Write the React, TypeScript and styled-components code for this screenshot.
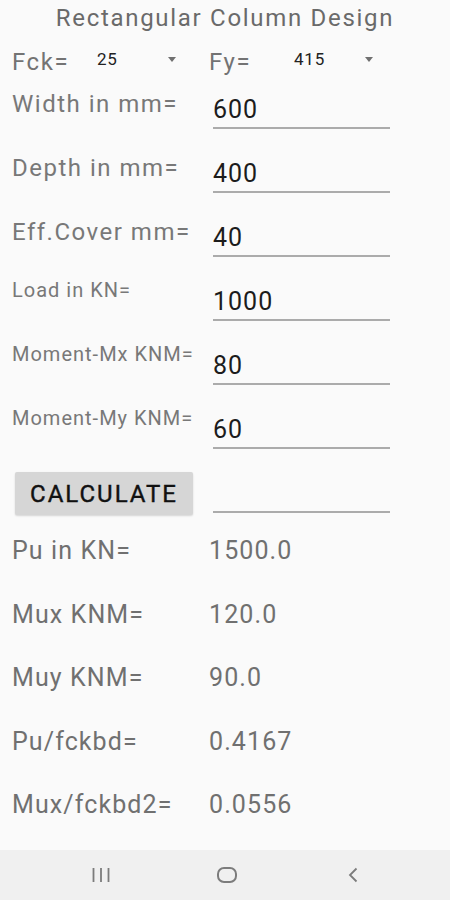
import styled, { createGlobalStyle } from "styled-components";

type Field = {
  label: string;
  value: string;
  small?: boolean;
};

const fields: Field[] = [
  { label: "Width in mm=", value: "600" },
  { label: "Depth in mm=", value: "400" },
  { label: "Eff.Cover mm=", value: "40" },
  { label: "Load in KN=", value: "1000", small: true },
  { label: "Moment-Mx KNM=", value: "80", small: true },
  { label: "Moment-My KNM=", value: "60", small: true },
];

const results = [
  { label: "Pu in KN=", value: "1500.0" },
  { label: "Mux KNM=", value: "120.0" },
  { label: "Muy KNM=", value: "90.0" },
  { label: "Pu/fckbd=", value: "0.4167" },
  { label: "Mux/fckbd2=", value: "0.0556" },
];

export default function App() {
  return (
    <>
      <GlobalStyle />
      <Page>
        <Title>Rectangular Column Design</Title>
        <SpinnerRow>
          <Spinner>
            <SpinnerLabel>Fck=</SpinnerLabel>
            <Select>
              <SelectValue>25</SelectValue>
              <Arrow />
            </Select>
          </Spinner>
          <Spinner>
            <SpinnerLabel>Fy=</SpinnerLabel>
            <Select>
              <SelectValue>415</SelectValue>
              <Arrow />
            </Select>
          </Spinner>
        </SpinnerRow>

        {fields.map((f) => (
          <Row key={f.label}>
            <Label $small={f.small}>{f.label}</Label>
            <Input defaultValue={f.value} readOnly />
          </Row>
        ))}

        <Row>
          <CalcButton>CALCULATE</CalcButton>
          <Input defaultValue="" readOnly />
        </Row>

        {results.map((r) => (
          <ResultRow key={r.label}>
            <span>{r.label}</span>
            <span>{r.value}</span>
          </ResultRow>
        ))}

        <NavBar>
          <NavButton>
            <svg width="18" height="16" viewBox="0 0 18 16">
              <path
                d="M1.5 1v14M9 1v14M16.5 1v14"
                stroke="#7c7c7c"
                strokeWidth="1.8"
                fill="none"
              />
            </svg>
          </NavButton>
          <NavButton>
            <svg width="20" height="16" viewBox="0 0 20 16">
              <rect
                x="1"
                y="1"
                width="18"
                height="14"
                rx="6"
                stroke="#7c7c7c"
                strokeWidth="2"
                fill="none"
              />
            </svg>
          </NavButton>
          <NavButton>
            <svg width="10" height="16" viewBox="0 0 10 16">
              <polyline
                points="8.5,1.5 2,8 8.5,14.5"
                stroke="#7c7c7c"
                strokeWidth="1.8"
                fill="none"
              />
            </svg>
          </NavButton>
        </NavBar>
      </Page>
    </>
  );
}

const GlobalStyle = createGlobalStyle`
  html, body, #root {
    height: 100%;
  }
  body {
    margin: 0;
    background: #fafafa;
    font-family: Roboto, "Noto Sans", Arial, sans-serif;
  }
  * {
    box-sizing: border-box;
  }
`;

const Page = styled.div`
  display: flex;
  flex-direction: column;
  height: 900px;
  background: #fafafa;
`;

const Title = styled.div`
  height: 38px;
  padding-top: 4px;
  text-align: center;
  font-size: 24px;
  line-height: 28px;
  letter-spacing: 1.7px;
  color: #6a6a6a;
`;

const SpinnerRow = styled.div`
  display: flex;
  height: 27px;
  padding-left: 12px;
`;

const Spinner = styled.div`
  display: flex;
  align-items: flex-start;
  width: 197px;
`;

const SpinnerLabel = styled.span`
  width: 85px;
  margin-top: 10px;
  font-size: 24px;
  line-height: 28px;
  letter-spacing: 1.6px;
  color: #737373;
`;

const Select = styled.div`
  display: flex;
  align-items: flex-start;
  justify-content: space-between;
  width: 79px;
`;

const SelectValue = styled.span`
  margin-top: 11px;
  font-size: 17px;
  line-height: 20px;
  letter-spacing: 0.8px;
  color: #222;
`;

const Arrow = styled.span`
  margin-top: 19px;
  width: 0;
  height: 0;
  border-left: 4.5px solid transparent;
  border-right: 4.5px solid transparent;
  border-top: 5px solid #707070;
`;

const Row = styled.div`
  display: grid;
  grid-template-columns: 201px 177px;
  height: 64px;
  padding-left: 12px;
`;

const Label = styled.span<{ $small?: boolean }>`
  padding-top: ${(p) => (p.$small ? "21px" : "25px")};
  font-size: ${(p) => (p.$small ? "20px" : "24px")};
  line-height: ${(p) => (p.$small ? "24px" : "28px")};
  letter-spacing: ${(p) => (p.$small ? "1px" : "1.5px")};
  color: #787878;
  white-space: nowrap;
`;

const Input = styled.input`
  width: 177px;
  height: 64px;
  margin: 0;
  padding: 30px 0 3px;
  border: none;
  border-bottom: 2px solid #ababab;
  border-radius: 0;
  background: transparent;
  font-family: inherit;
  font-size: 25px;
  letter-spacing: 1px;
  color: #1c1c1c;
  outline: none;
`;

const CalcButton = styled.button`
  width: 178px;
  height: 43px;
  margin: 23px 0 0 3px;
  padding: 0;
  border: none;
  border-radius: 2px;
  background: #d6d6d6;
  box-shadow: 0 1px 2px rgba(0, 0, 0, 0.15);
  font-family: inherit;
  font-size: 24px;
  font-weight: 400;
  letter-spacing: 2px;
  -webkit-text-stroke: 0.4px #111;
  color: #111;
`;

const ResultRow = styled.div`
  display: grid;
  grid-template-columns: 197px 1fr;
  height: 63.5px;
  padding: 23px 0 0 12px;
  font-size: 25px;
  line-height: 29px;
  letter-spacing: 1.1px;
  color: #707070;
`;

const NavBar = styled.div`
  display: flex;
  justify-content: center;
  align-items: center;
  height: 50px;
  margin-top: auto;
  padding-left: 4px;
  background: #f0f0f0;
`;

const NavButton = styled.div`
  display: flex;
  justify-content: center;
  align-items: center;
  width: 126px;
`;
